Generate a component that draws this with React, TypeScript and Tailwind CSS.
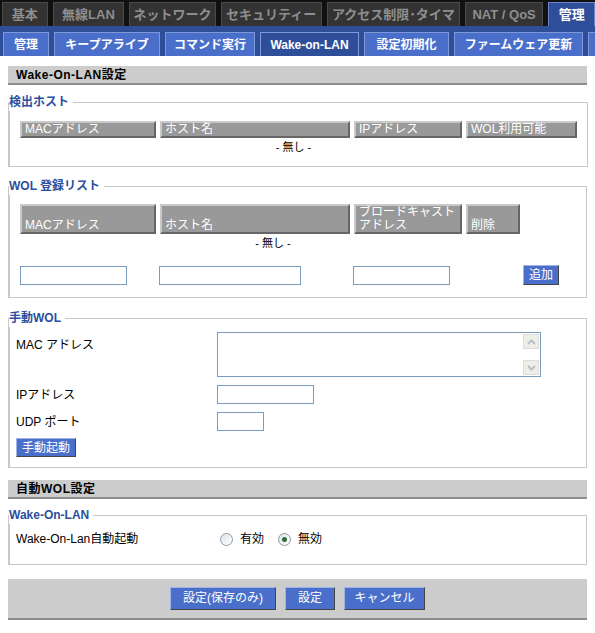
import React from "react";

const topTabs = [
  { label: "基本", w: "w-[46px]" },
  { label: "無線LAN", w: "w-[72px]" },
  { label: "ネットワーク", w: "w-[87px]" },
  { label: "セキュリティー", w: "w-[102px]" },
  { label: "アクセス制限･タイマ", w: "w-[134px]" },
  { label: "NAT / QoS", w: "w-[79px]" },
];

const subTabs = [
  { label: "管理", w: "w-[46px]" },
  { label: "キープアライブ", w: "w-[106px]" },
  { label: "コマンド実行", w: "w-[90px]" },
  { label: "Wake-on-LAN", w: "w-[99px]", active: true },
  { label: "設定初期化", w: "w-[85px]" },
  { label: "ファームウェア更新", w: "w-[129px]" },
  { label: "", w: "w-[20px]" },
];

function SectionHeader({ title }: { title: string }) {
  return (
    <div className="h-[19px] bg-[#cccccc] border-b-2 border-[#8c8c8c] pl-[8px] text-[12px] font-bold leading-[18px] text-black tracking-[0.5px]">
      {title}
    </div>
  );
}

function Fieldset({ legend, children }: { legend: string; children: React.ReactNode }) {
  return (
    <fieldset className="border border-[#c8c8c8] border-l-2 mx-0 px-[10px] pb-[10px] pt-0">
      <legend className="-ml-[11px] pr-[4px] text-[12px] font-bold text-[#2a4f9e]">{legend}</legend>
      {children}
    </fieldset>
  );
}

function HeadCell({ children, w, className = "" }: { children?: React.ReactNode; w: string; className?: string }) {
  return (
    <div
      className={`${w} bg-[#999999] border-t-2 border-l-2 border-t-[#c9c9c9] border-l-[#c9c9c9] border-b-2 border-r-2 border-b-[#666666] border-r-[#666666] px-[3px] text-[12px] leading-[13px] text-white ${className}`}
    >
      {children}
    </div>
  );
}

function BlueButton({ children, className = "" }: { children: React.ReactNode; className?: string }) {
  return (
    <button className={`bg-[#4a6fca] text-white text-[12px] border border-t-[#9fb4e6] border-l-[#9fb4e6] border-b-[#444] border-r-[#444] px-[5px] ${className}`}>
      {children}
    </button>
  );
}

function Radio({ checked, label }: { checked?: boolean; label: string }) {
  return (
    <label className="flex items-center gap-[7px]">
      <span className="w-[13px] h-[13px] rounded-full border border-[#8a9aa8] bg-gradient-to-br from-[#dfe3e6] to-white flex items-center justify-center">
        {checked && <span className="w-[5px] h-[5px] rounded-full bg-[#2f6b3a]" />}
      </span>
      {label}
    </label>
  );
}

export default function App() {
  return (
    <div className="w-[595px] h-[633px] bg-white text-[12px] text-black overflow-hidden" style={{ fontFamily: '"Liberation Sans", "Noto Sans CJK JP", sans-serif' }}>
      {/* top tabs */}
      <div className="h-[26px] bg-[#111111] flex items-end gap-[5px] pl-[2px]">
        {topTabs.map((t) => (
          <div
            key={t.label}
            className={`${t.w} h-[24px] bg-[#333333] border border-[#4a4a4a] border-b-0 flex items-center justify-center text-[13px] font-bold text-[#8e8e8e]`}
          >
            {t.label}
          </div>
        ))}
        <div className="w-[47px] h-[24px] bg-[#2f4e99] border border-[#6a86cc] border-b-0 flex items-center justify-center text-[13px] font-bold text-white">
          管理
        </div>
      </div>

      {/* sub tabs */}
      <div className="h-[30px] bg-[#2f4e99] flex items-end gap-[5px] pl-[3px] overflow-hidden">
        {subTabs.map((t, i) => (
          <div
            key={i}
            className={`${t.w} shrink-0 h-[24px] border border-[#7f98d8] border-b-0 flex items-center justify-center text-[12px] font-bold text-white whitespace-nowrap ${t.active ? "bg-[#2f4e99]" : "bg-[#4a6fca]"}`}
          >
            {t.label}
          </div>
        ))}
      </div>

      <div className="px-[8px] pt-[10px]">
        <SectionHeader title="Wake-On-LAN設定" />

        <div className="mt-[8px]">
          <Fieldset legend="検出ホスト">
            <div className="flex gap-[4px] mt-[10px]">
              <HeadCell w="w-[136px]">MACアドレス</HeadCell>
              <HeadCell w="w-[190px]">ホスト名</HeadCell>
              <HeadCell w="w-[108px]">IPアドレス</HeadCell>
              <HeadCell w="w-[111px]">WOL利用可能</HeadCell>
            </div>
            <div className="text-center text-[11px] h-[18px] leading-[18px] mr-[10px]">- 無し -</div>
          </Fieldset>
        </div>

        <div className="mt-[10px]">
          <Fieldset legend="WOL 登録リスト">
            <div className="flex gap-[4px] mt-[9px] items-stretch">
              <HeadCell w="w-[136px]" className="flex items-end">MACアドレス</HeadCell>
              <HeadCell w="w-[190px]" className="flex items-end">ホスト名</HeadCell>
              <HeadCell w="w-[108px]">ブロードキャストアドレス</HeadCell>
              <HeadCell w="w-[54px]" className="flex items-end">削除</HeadCell>
            </div>
            <div className="text-center text-[11px] h-[20px] leading-[18px] mr-[50px]">- 無し -</div>
            <div className="flex items-center mt-[11px] h-[20px] mb-[2px]">
              <input className="w-[107px] h-[19px] border border-[#7a9cba] outline-none" />
              <input className="ml-[32px] w-[142px] h-[19px] border border-[#7a9cba] outline-none" />
              <input className="ml-[52px] w-[97px] h-[19px] border border-[#7a9cba] outline-none" />
              <BlueButton className="ml-[73px] h-[20px] px-[3px]">追加</BlueButton>
            </div>
          </Fieldset>
        </div>

        <div className="mt-[11px]">
          <Fieldset legend="手動WOL">
            <div className="-ml-[4px]">
              <div className="flex mt-[5px]">
                <div className="w-[201px] pt-[4px]">MAC アドレス</div>
                <div className="w-[324px] h-[45px] border border-[#7a9cba] flex justify-end">
                  <div className="w-[16px] flex flex-col justify-between py-[1px] mr-[1px]">
                    <div className="h-[15px] bg-[#eeeee6] border border-[#dddddd] flex items-center justify-center">
                      <svg width="9" height="6" viewBox="0 0 9 6"><path d="M1 5 L4.5 1.5 L8 5" stroke="#b8c0c8" strokeWidth="2" fill="none" /></svg>
                    </div>
                    <div className="h-[15px] bg-[#eeeee6] border border-[#dddddd] flex items-center justify-center">
                      <svg width="9" height="6" viewBox="0 0 9 6"><path d="M1 1 L4.5 4.5 L8 1" stroke="#b8c0c8" strokeWidth="2" fill="none" /></svg>
                    </div>
                  </div>
                </div>
              </div>
              <div className="flex mt-[8px] items-center">
                <div className="w-[201px]">IPアドレス</div>
                <input className="w-[97px] h-[19px] border border-[#7a9cba] outline-none" />
              </div>
              <div className="flex mt-[8px] items-center">
                <div className="w-[201px]">UDP ポート</div>
                <input className="w-[47px] h-[19px] border border-[#7a9cba] outline-none" />
              </div>
              <BlueButton className="mt-[7px] h-[19px] mb-[-2px]">手動起動</BlueButton>
            </div>
          </Fieldset>
        </div>

        <div className="mt-[12px]">
          <SectionHeader title="自動WOL設定" />
        </div>

        <div className="mt-[7px]">
          <Fieldset legend="Wake-On-LAN">
            <div className="-ml-[4px] flex items-center mt-[5px] h-[20px] mb-[5px]">
              <div className="w-[204px]">Wake-On-Lan自動起動</div>
              <Radio label="有効" />
              <div className="ml-[14px]">
                <Radio label="無効" checked />
              </div>
            </div>
          </Fieldset>
        </div>

        <div className="mt-[14px] h-[41px] bg-[#cccccc] border-b-2 border-[#8c8c8c] flex items-center justify-center gap-[9px] pb-[1px]">
          <BlueButton className="h-[23px] w-[106px]">設定(保存のみ)</BlueButton>
          <BlueButton className="h-[23px] w-[50px]">設定</BlueButton>
          <BlueButton className="h-[23px] w-[81px]">キャンセル</BlueButton>
        </div>
      </div>
    </div>
  );
}
